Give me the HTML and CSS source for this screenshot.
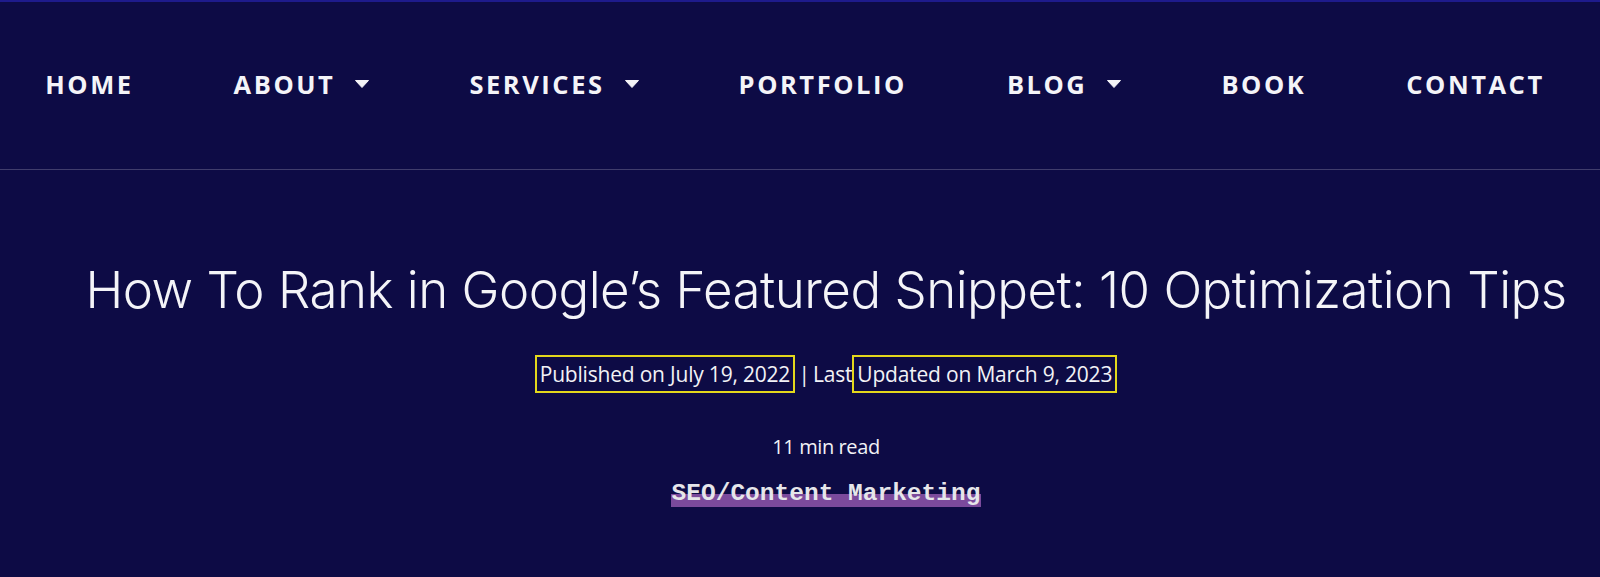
FILE: index.html
```html
<!DOCTYPE html>
<html lang="en">
<head>
  <meta charset="UTF-8">
  <title>How To Rank in Google's Featured Snippet</title>
  <link rel="stylesheet" href="styles.css">
</head>
<body>

  <header class="site-header">
    <nav class="main-nav">
      <a href="#" class="nav-link">HOME</a>
      <a href="#" class="nav-link">ABOUT <svg class="caret" viewBox="0 0 14 8"><path d="M0.5 0.5h13L7 7.5z"/></svg></a>
      <a href="#" class="nav-link">SERVICES <svg class="caret" viewBox="0 0 14 8"><path d="M0.5 0.5h13L7 7.5z"/></svg></a>
      <a href="#" class="nav-link">PORTFOLIO</a>
      <a href="#" class="nav-link">BLOG <svg class="caret" viewBox="0 0 14 8"><path d="M0.5 0.5h13L7 7.5z"/></svg></a>
      <a href="#" class="nav-link">BOOK</a>
      <a href="#" class="nav-link">CONTACT</a>
    </nav>
  </header>

  <main class="post-head">
    <h1 class="post-title">How To Rank in Google’s Featured Snippet: 10 Optimization Tips</h1>

    <p class="post-dates">
      <span class="date-box">Published on July 19, 2022</span> | Last<span class="date-box">Updated on March 9, 2023</span>
    </p>

    <p class="read-time">11 min read</p>

    <p class="post-category"><span class="highlight">SEO/Content Marketing</span></p>
  </main>

</body>
</html>
```

FILE: styles.css
```css
body {
  margin: 0;
  background: #0d0b45;
  color: #f2f2f6;
  font-family: "Open Sans", sans-serif;
}

.site-header {
  border-top: 2px solid #1e1b8c;
  border-bottom: 1px solid #403d6c;
}

.main-nav {
  height: 167px;
  display: flex;
  align-items: center;
  justify-content: center;
  gap: 100px;
  padding-right: 10px;
}

.nav-link {
  display: flex;
  align-items: center;
  gap: 20px;
  color: #f4f4f8;
  text-decoration: none;
  font-weight: 700;
  font-size: 25.5px;
  letter-spacing: 2.55px;
  margin-top: -4px;
}

.caret {
  width: 14px;
  height: 8px;
  fill: #f4f4f8;
  stroke: #f4f4f8;
  stroke-linejoin: round;
}

.post-head {
  padding-left: 52px;
  text-align: center;
}

.post-title {
  margin: 85px 0 0;
  font-family: Inter, sans-serif;
  font-weight: 300;
  font-size: 51px;
  line-height: 70px;
  letter-spacing: -0.5px;
  color: #f4f4f8;
}

.post-dates {
  margin: 30px 0 0;
  font-size: 21px;
  letter-spacing: -0.2px;
  line-height: 34px;
  word-spacing: -2px;
}

.date-box {
  display: inline-block;
  border: 2px solid #e3d81c;
  padding: 0 3px;
  word-spacing: 0;
}

.read-time {
  margin: 40px 0 0;
  font-size: 20px;
  letter-spacing: -0.4px;
}

.post-category {
  margin: 20px 0 0;
  font-family: "Liberation Mono", monospace;
  font-weight: 700;
  font-size: 24.5px;
  color: #e6e6ea;
}

.highlight {
  background: linear-gradient(to bottom, transparent 46%, #7b4a9c 46%);
  padding: 0 1px 4px;
}
```
